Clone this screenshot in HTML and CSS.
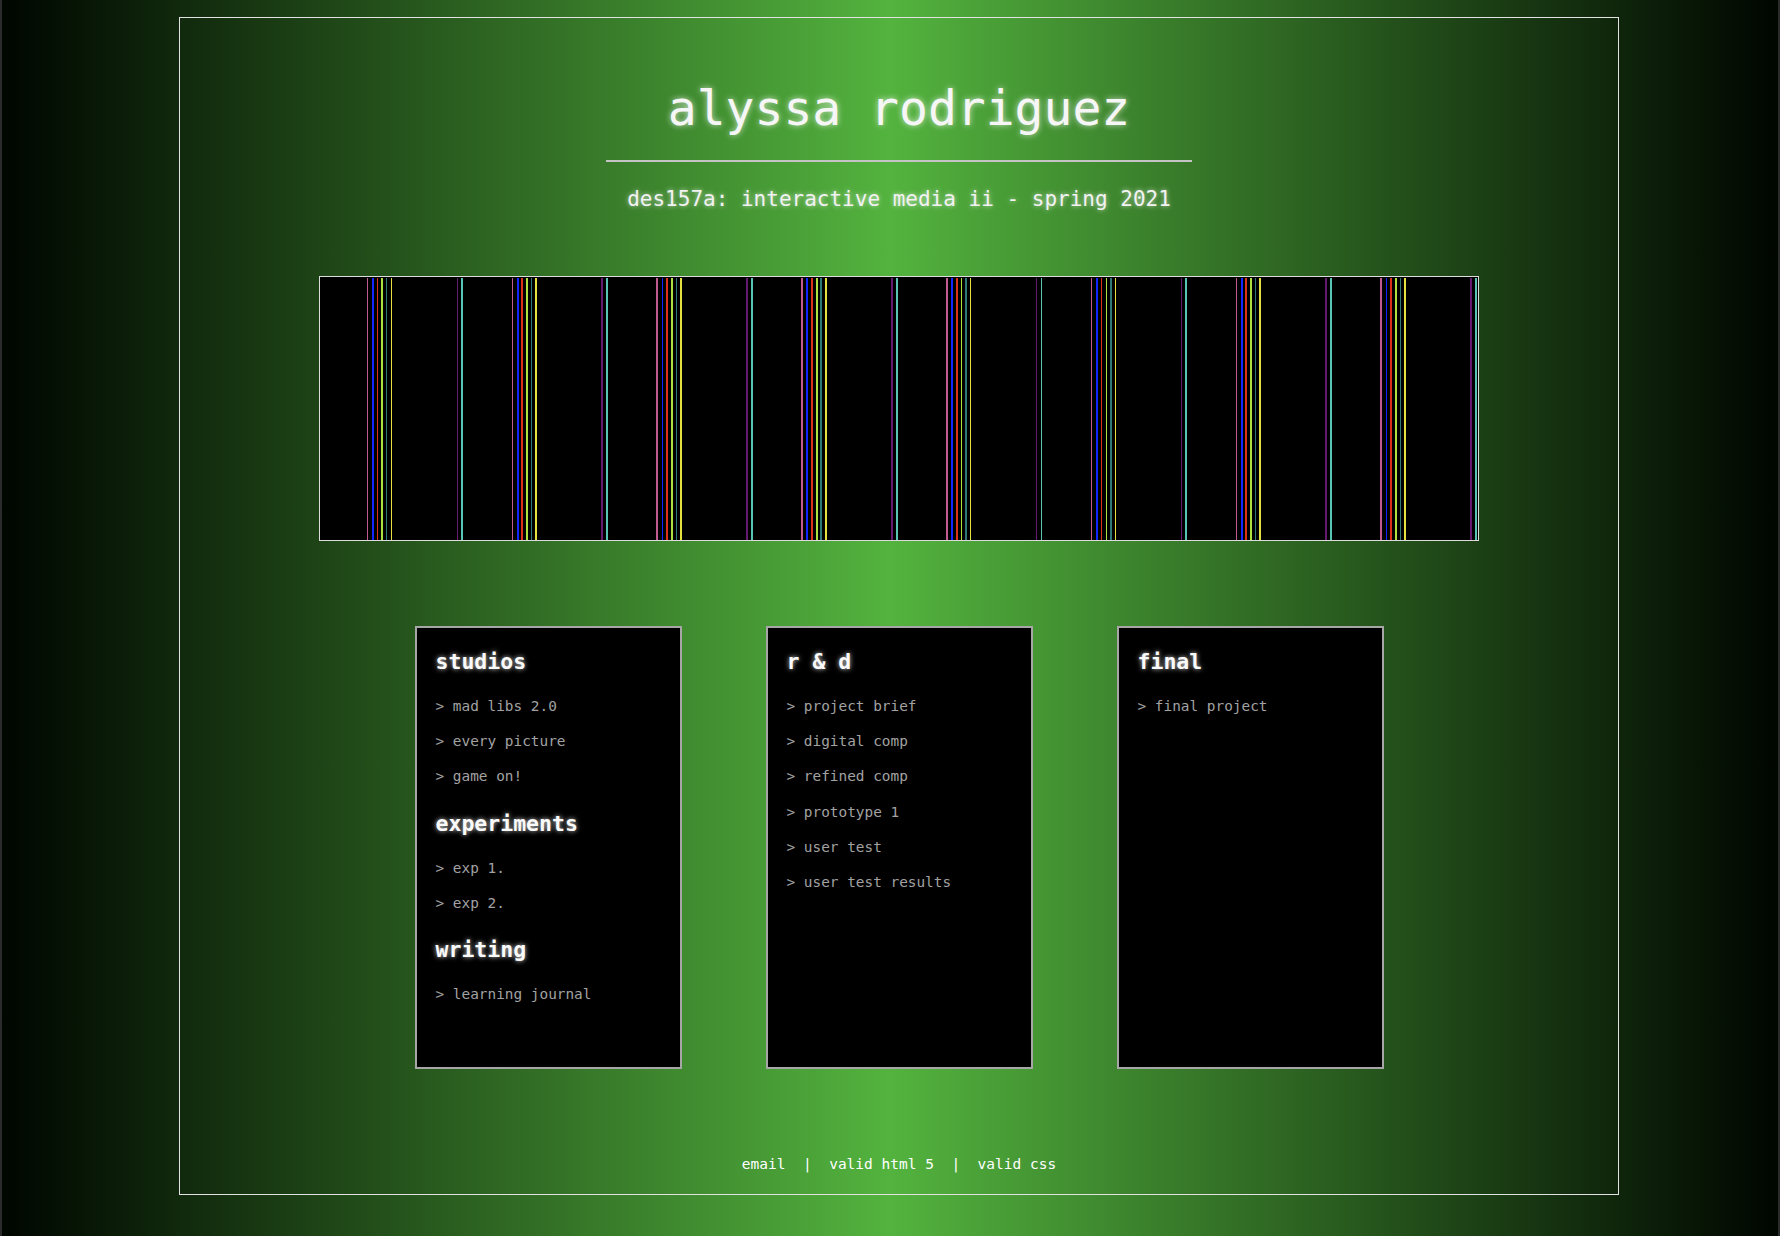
FILE: index.html
```html
<!DOCTYPE html>
<html lang="en">
<head>
<meta charset="utf-8">
<title>alyssa rodriguez - des157a</title>
<link rel="stylesheet" href="styles.css">
</head>
<body>
<div class="frame">
  <h1 class="title">alyssa rodriguez</h1>
  <hr class="rule">
  <p class="subtitle">des157a: interactive media ii - spring 2021</p>
  <div class="banner"><div class="stripes"></div></div>
  <div class="cards">
    <section class="card">
      <h3>studios</h3>
      <ul>
        <li>&gt; mad libs 2.0</li>
        <li>&gt; every picture</li>
        <li>&gt; game on!</li>
      </ul>
      <h3>experiments</h3>
      <ul>
        <li>&gt; exp 1.</li>
        <li>&gt; exp 2.</li>
      </ul>
      <h3>writing</h3>
      <ul>
        <li>&gt; learning journal</li>
      </ul>
    </section>
    <section class="card">
      <h3>r &amp; d</h3>
      <ul>
        <li>&gt; project brief</li>
        <li>&gt; digital comp</li>
        <li>&gt; refined comp</li>
        <li>&gt; prototype 1</li>
        <li>&gt; user test</li>
        <li>&gt; user test results</li>
      </ul>
    </section>
    <section class="card">
      <h3>final</h3>
      <ul>
        <li>&gt; final project</li>
      </ul>
    </section>
  </div>
  <p class="footer"><a href="#">email</a>  |  <a href="#">valid html 5</a>  |  <a href="#">valid css</a></p>
</div>
</body>
</html>
```
FILE: styles.css
```css
html {
  background: #2b2b2b;
}

body {
  margin: 0;
  min-height: 1236px;
  box-sizing: border-box;
  border-left: 2px solid #2b2b2b;
  border-right: 2px solid #2b2b2b;
  padding: 17px 0 41px;
  background: linear-gradient(to right, #000600 0%, #53b33e 50%, #000600 100%);
  font-family: "DejaVu Sans Mono", "Liberation Mono", monospace;
}

.frame {
  width: 1440px;
  height: 1178px;
  box-sizing: border-box;
  margin-left: 177px;
  border: 1px solid #e2e2e2;
  padding-top: 62px;
  display: flex;
  flex-direction: column;
  align-items: center;
}

.title {
  margin: 0;
  font-size: 48px;
  line-height: 57px;
  font-weight: normal;
  color: #f6f6f6;
  text-shadow: 0 0 6px rgba(255, 255, 255, 0.75);
}

.rule {
  width: 586px;
  height: 2px;
  border: 0;
  margin: 23px 0 0;
  background: #c4c4c4;
}

.subtitle {
  margin: 25px 0 0;
  font-size: 21px;
  line-height: 24px;
  color: #f2f2f2;
  text-shadow: 0 0 5px rgba(255, 255, 255, 0.7);
}

.banner {
  margin-top: 65px;
  width: 1160px;
  height: 265px;
  box-sizing: border-box;
  border: 1px solid #dcdcdc;
  padding-top: 1px;
  background: #000;
}

.stripes {
  height: 100%;
  background: repeating-linear-gradient(to right,
    transparent 0 46.8px,
    #c25a92 46.8px 48.5px,
    transparent 48.5px 52px,
    #1226ff 52px 53.7px,
    transparent 53.7px 56.6px,
    #dc3018 56.6px 58.3px,
    transparent 58.3px 61.5px,
    #aee040 61.5px 63.2px,
    transparent 63.2px 66px,
    #2f7878 66px 67.5px,
    transparent 67.5px 70.6px,
    #e4e040 70.6px 72.3px,
    transparent 72.3px 136.6px,
    #641a6e 136.6px 138.3px,
    transparent 138.3px 141.4px,
    #58c4b4 141.4px 143.1px,
    transparent 143.1px 144.8px);
}

.cards {
  display: flex;
  gap: 84px;
  margin-top: 85px;
}

.card {
  width: 267px;
  height: 443px;
  box-sizing: border-box;
  border: 2px solid #a6a6a6;
  background: #000;
  padding: 21px 19px 0;
}

.card h3 {
  margin: 16px 0 14px;
  font-size: 21.5px;
  line-height: 26px;
  font-weight: bold;
  color: #fafafa;
  text-shadow: 0 0 5px rgba(255, 255, 255, 0.8);
}

.card h3:first-child {
  margin-top: 0;
}

.card ul {
  list-style: none;
  margin: 0;
  padding: 0;
}

.card li {
  font-size: 14.4px;
  line-height: 35.2px;
  color: #a2a2a2;
}

.footer {
  margin: auto 0 21px;
  font-size: 14.5px;
  line-height: 17px;
  white-space: pre;
  color: #fff;
}

.footer a {
  color: #fff;
  text-decoration: none;
}
```
